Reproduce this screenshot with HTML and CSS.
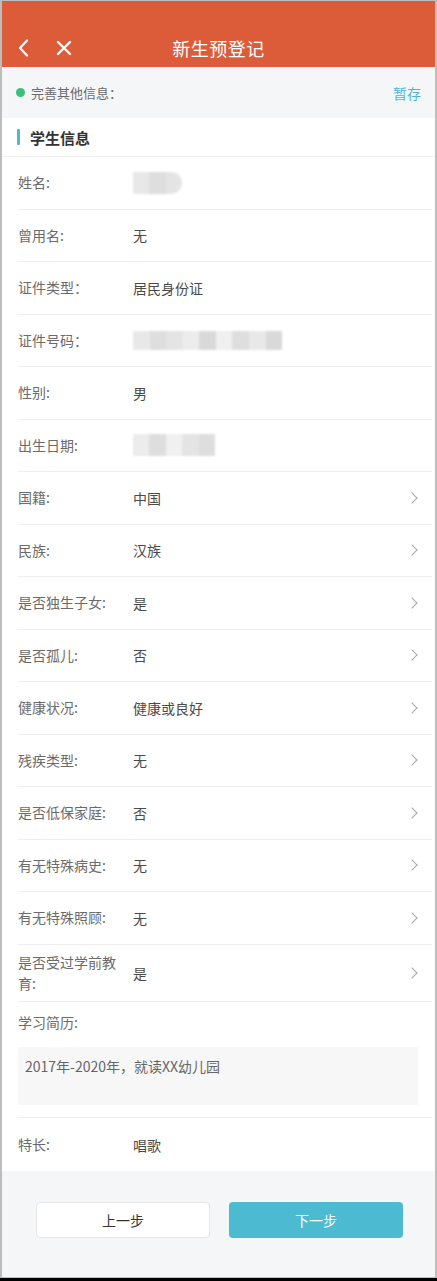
FILE: index.html
```html
<!DOCTYPE html>
<html lang="zh-CN">
<head>
<meta charset="utf-8">
<title>新生预登记</title>
<link rel="stylesheet" href="styles.css">
</head>
<body>
<div class="phone">
  <header class="topbar">
    <div class="nav">
      <div class="nav-left">
        <svg class="ico" width="14" height="18" viewBox="0 0 14 18"><path d="M10 1.5 L3 9 L10 16.5" fill="none" stroke="#fff" stroke-width="2.2" stroke-linecap="round" stroke-linejoin="round"/></svg>
        <svg class="ico close" width="16" height="16" viewBox="0 0 16 16"><path d="M2 2 L14 14 M14 2 L2 14" fill="none" stroke="#fff" stroke-width="2.4" stroke-linecap="round"/></svg>
      </div>
      <h1 class="title">新生预登记</h1>
    </div>
  </header>

  <div class="infobar">
    <div class="info-left"><span class="dot"></span>完善其他信息：</div>
    <span class="save">暂存</span>
  </div>

  <main class="card">
    <div class="section-title"><span class="bar"></span>学生信息</div>

    <div class="row"><span class="label">姓名:</span><span class="value"><span class="mosaic m-name"><i class="s1"></i><i class="s2"></i><i class="s3"></i></span></span></div>
    <div class="row"><span class="label">曾用名:</span><span class="value">无</span></div>
    <div class="row"><span class="label">证件类型：</span><span class="value">居民身份证</span></div>
    <div class="row"><span class="label">证件号码：</span><span class="value"><span class="mosaic m-id"><i class="s1"></i><i class="s2"></i><i class="s3"></i><i class="s4"></i><i class="s5"></i><i class="s6"></i><i class="s2"></i><i class="s1"></i><i class="s5"></i></span></span></div>
    <div class="row"><span class="label">性别:</span><span class="value">男</span></div>
    <div class="row"><span class="label">出生日期:</span><span class="value"><span class="mosaic m-date"><i class="s4"></i><i class="s2"></i><i class="s6"></i><i class="s3"></i><i class="s2"></i></span></span></div>
    <div class="row arrow"><span class="label">国籍:</span><span class="value">中国</span><span class="chev"></span></div>
    <div class="row arrow"><span class="label">民族:</span><span class="value">汉族</span><span class="chev"></span></div>
    <div class="row arrow"><span class="label">是否独生子女:</span><span class="value">是</span><span class="chev"></span></div>
    <div class="row arrow"><span class="label">是否孤儿:</span><span class="value">否</span><span class="chev"></span></div>
    <div class="row arrow"><span class="label">健康状况:</span><span class="value">健康或良好</span><span class="chev"></span></div>
    <div class="row arrow"><span class="label">残疾类型:</span><span class="value">无</span><span class="chev"></span></div>
    <div class="row arrow"><span class="label">是否低保家庭:</span><span class="value">否</span><span class="chev"></span></div>
    <div class="row arrow"><span class="label">有无特殊病史:</span><span class="value">无</span><span class="chev"></span></div>
    <div class="row arrow"><span class="label">有无特殊照顾:</span><span class="value">无</span><span class="chev"></span></div>
    <div class="row arrow tall"><span class="label">是否受过学前教育:</span><span class="value">是</span><span class="chev"></span></div>

    <div class="block">
      <div class="block-label">学习简历:</div>
      <div class="textarea">2017年-2020年，就读XX幼儿园</div>
    </div>

    <div class="row last"><span class="label">特长:</span><span class="value">唱歌</span></div>
  </main>

  <footer class="footer">
    <button class="btn prev">上一步</button>
    <button class="btn next">下一步</button>
  </footer>
</div>
</body>
</html>
```

FILE: styles.css
```css
* { box-sizing: border-box; }
html, body { margin: 0; padding: 0; background: #000; }
body {
  font-family: "Noto Sans CJK SC", "Noto Sans", "Liberation Sans", sans-serif;
  width: 437px;
  height: 1281px;
  overflow: hidden;
}
.phone {
  width: 437px;
  height: 1278px;
  border: 2px solid #bdbdbd;
  border-top-width: 1px;
  background: #fff;
  display: flex;
  flex-direction: column;
}
.topbar {
  height: 66px;
  background: #dc5c39;
  display: flex;
  flex-direction: column;
  justify-content: flex-end;
  flex: 0 0 auto;
}
.nav {
  height: 40px;
  position: relative;
  display: flex;
  align-items: center;
  justify-content: center;
}
.nav-left {
  position: absolute;
  left: 15px;
  top: 12px;
  display: flex;
  align-items: center;
  gap: 25px;
}
.ico { display: block; }
.title {
  margin: 0;
  color: #fff;
  font-size: 18px;
  font-weight: 400;
  letter-spacing: 0.5px;
  line-height: 1;
  padding-top: 1px;
}
.infobar {
  height: 51px;
  background: #f5f6f8;
  display: flex;
  align-items: center;
  justify-content: space-between;
  padding: 0 14px 0 14px;
  flex: 0 0 auto;
}
.info-left {
  display: flex;
  align-items: center;
  font-size: 13px;
  color: #6a6a6a;
}
.dot {
  width: 9px;
  height: 9px;
  border-radius: 50%;
  background: #3bbf7c;
  margin-right: 6px;
}
.save {
  color: #53b5d1;
  font-size: 14px;
}
.card {
  flex: 1 1 auto;
  background: #fff;
}
.section-title {
  height: 39px;
  border-bottom: 1px solid #efeff1;
  display: flex;
  align-items: center;
  padding-left: 15px;
  font-size: 15px;
  font-weight: 700;
  color: #333;
}
.bar {
  width: 3px;
  height: 16px;
  background: #4cbbd2;
  border-radius: 1px;
  margin-right: 10px;
}
.row {
  height: 52.5px;
  margin-left: 16px;
  margin-right: 3px;
  border-bottom: 1px solid #efeff1;
  display: flex;
  align-items: center;
  font-size: 14px;
}
.row.tall { height: 57.5px; }
.row.last { border-bottom: none; height: 53px; }
.label {
  flex: 0 0 108px;
  margin-right: 7px;
  color: #6b6b6b;
  line-height: 21px;
}
.value {
  flex: 1 1 auto;
  color: #4a4a4a;
}
.chev {
  width: 8px;
  height: 8px;
  border-right: 1.5px solid #a8a8a8;
  border-top: 1.5px solid #a8a8a8;
  transform: rotate(45deg);
  margin-right: 16px;
}
.mosaic {
  display: flex;
  filter: blur(0.8px);
}
.mosaic i { display: block; height: 100%; flex: 1 1 0; }
.m-name { width: 49px; height: 22px; border-radius: 0 11px 11px 0; overflow: hidden; }
.m-id { width: 149px; height: 19px; margin-top: 1px; }
.m-date { width: 82px; height: 22px; }
.s1 { background: #e8e8e8; }
.s2 { background: #dedede; }
.s3 { background: #e4e4e4; }
.s4 { background: #ececec; }
.s5 { background: #d9d9d9; }
.s6 { background: #f0f0f0; }
.block {
  margin-left: 16px;
  margin-right: 3px;
  border-bottom: 1px solid #efeff1;
  padding-top: 8px;
  height: 116px;
}
.block-label {
  font-size: 14px;
  color: #6b6b6b;
  line-height: 24px;
  margin-bottom: 13px;
}
.textarea {
  width: 400px;
  height: 58px;
  background: #f7f7f7;
  color: #666;
  font-size: 14px;
  padding: 9px 7px;
  line-height: 20px;
}
.footer {
  flex: 0 0 106px;
  background: #f5f6f8;
  display: flex;
  align-items: flex-start;
  justify-content: space-between;
  padding: 31px 32px 0 34px;
}
.btn {
  width: 174px;
  height: 36px;
  border-radius: 4px;
  font-family: inherit;
  font-size: 14px;
  cursor: pointer;
}
.prev {
  background: #fff;
  border: 1px solid #e6e6e6;
  color: #333;
}
.next {
  background: #4cbbd2;
  border: none;
  color: #fff;
}
```
